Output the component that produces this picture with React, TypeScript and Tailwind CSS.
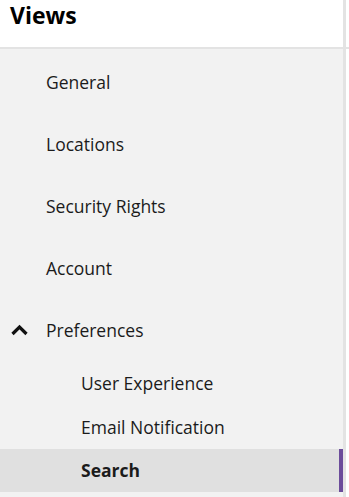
const items = ['General', 'Locations', 'Security Rights', 'Account'];
const subItems = ['User Experience', 'Email Notification'];

const App = () => {
  return (
    <div
      className="w-[349px] h-[497px] bg-white flex flex-col overflow-hidden text-[#1b1b1b]"
      style={{ fontFamily: '"Open Sans", "Liberation Sans", sans-serif' }}
    >
      <header className="h-[49px] shrink-0 border-b-2 border-[#e3e3e3]">
        <div className="w-[346px] h-full border-r-[3px] border-[#e3e3e3] pl-[10px]">
          <h1 className="text-[23px] font-bold leading-[30px] text-black">Views</h1>
        </div>
      </header>

      <nav className="w-[346px] flex-1 bg-[#f2f2f2] border-r-[3px] border-[#e3e3e3] pt-[2px] text-[17.5px]">
        {items.map((label) => (
          <div key={label} className="h-[62px] flex items-center pl-[46px]">
            {label}
          </div>
        ))}

        <div className="h-[62px] flex items-center">
          <span className="w-[46px] flex justify-start pl-[10px]">
            <svg width="19" height="12" viewBox="0 0 19 12" fill="none">
              <path d="M2.5 10 L9.5 3 L16.5 10" stroke="#111" strokeWidth="3.2" />
            </svg>
          </span>
          Preferences
        </div>

        {subItems.map((label) => (
          <div key={label} className="h-11 flex items-center pl-[81px]">
            {label}
          </div>
        ))}

        <div className="h-[43px] flex items-center pl-[81px] font-bold bg-[#e0e0e0] border-r-4 border-[#6b4c9a]">
          Search
        </div>
      </nav>
    </div>
  );
};

export default App;
